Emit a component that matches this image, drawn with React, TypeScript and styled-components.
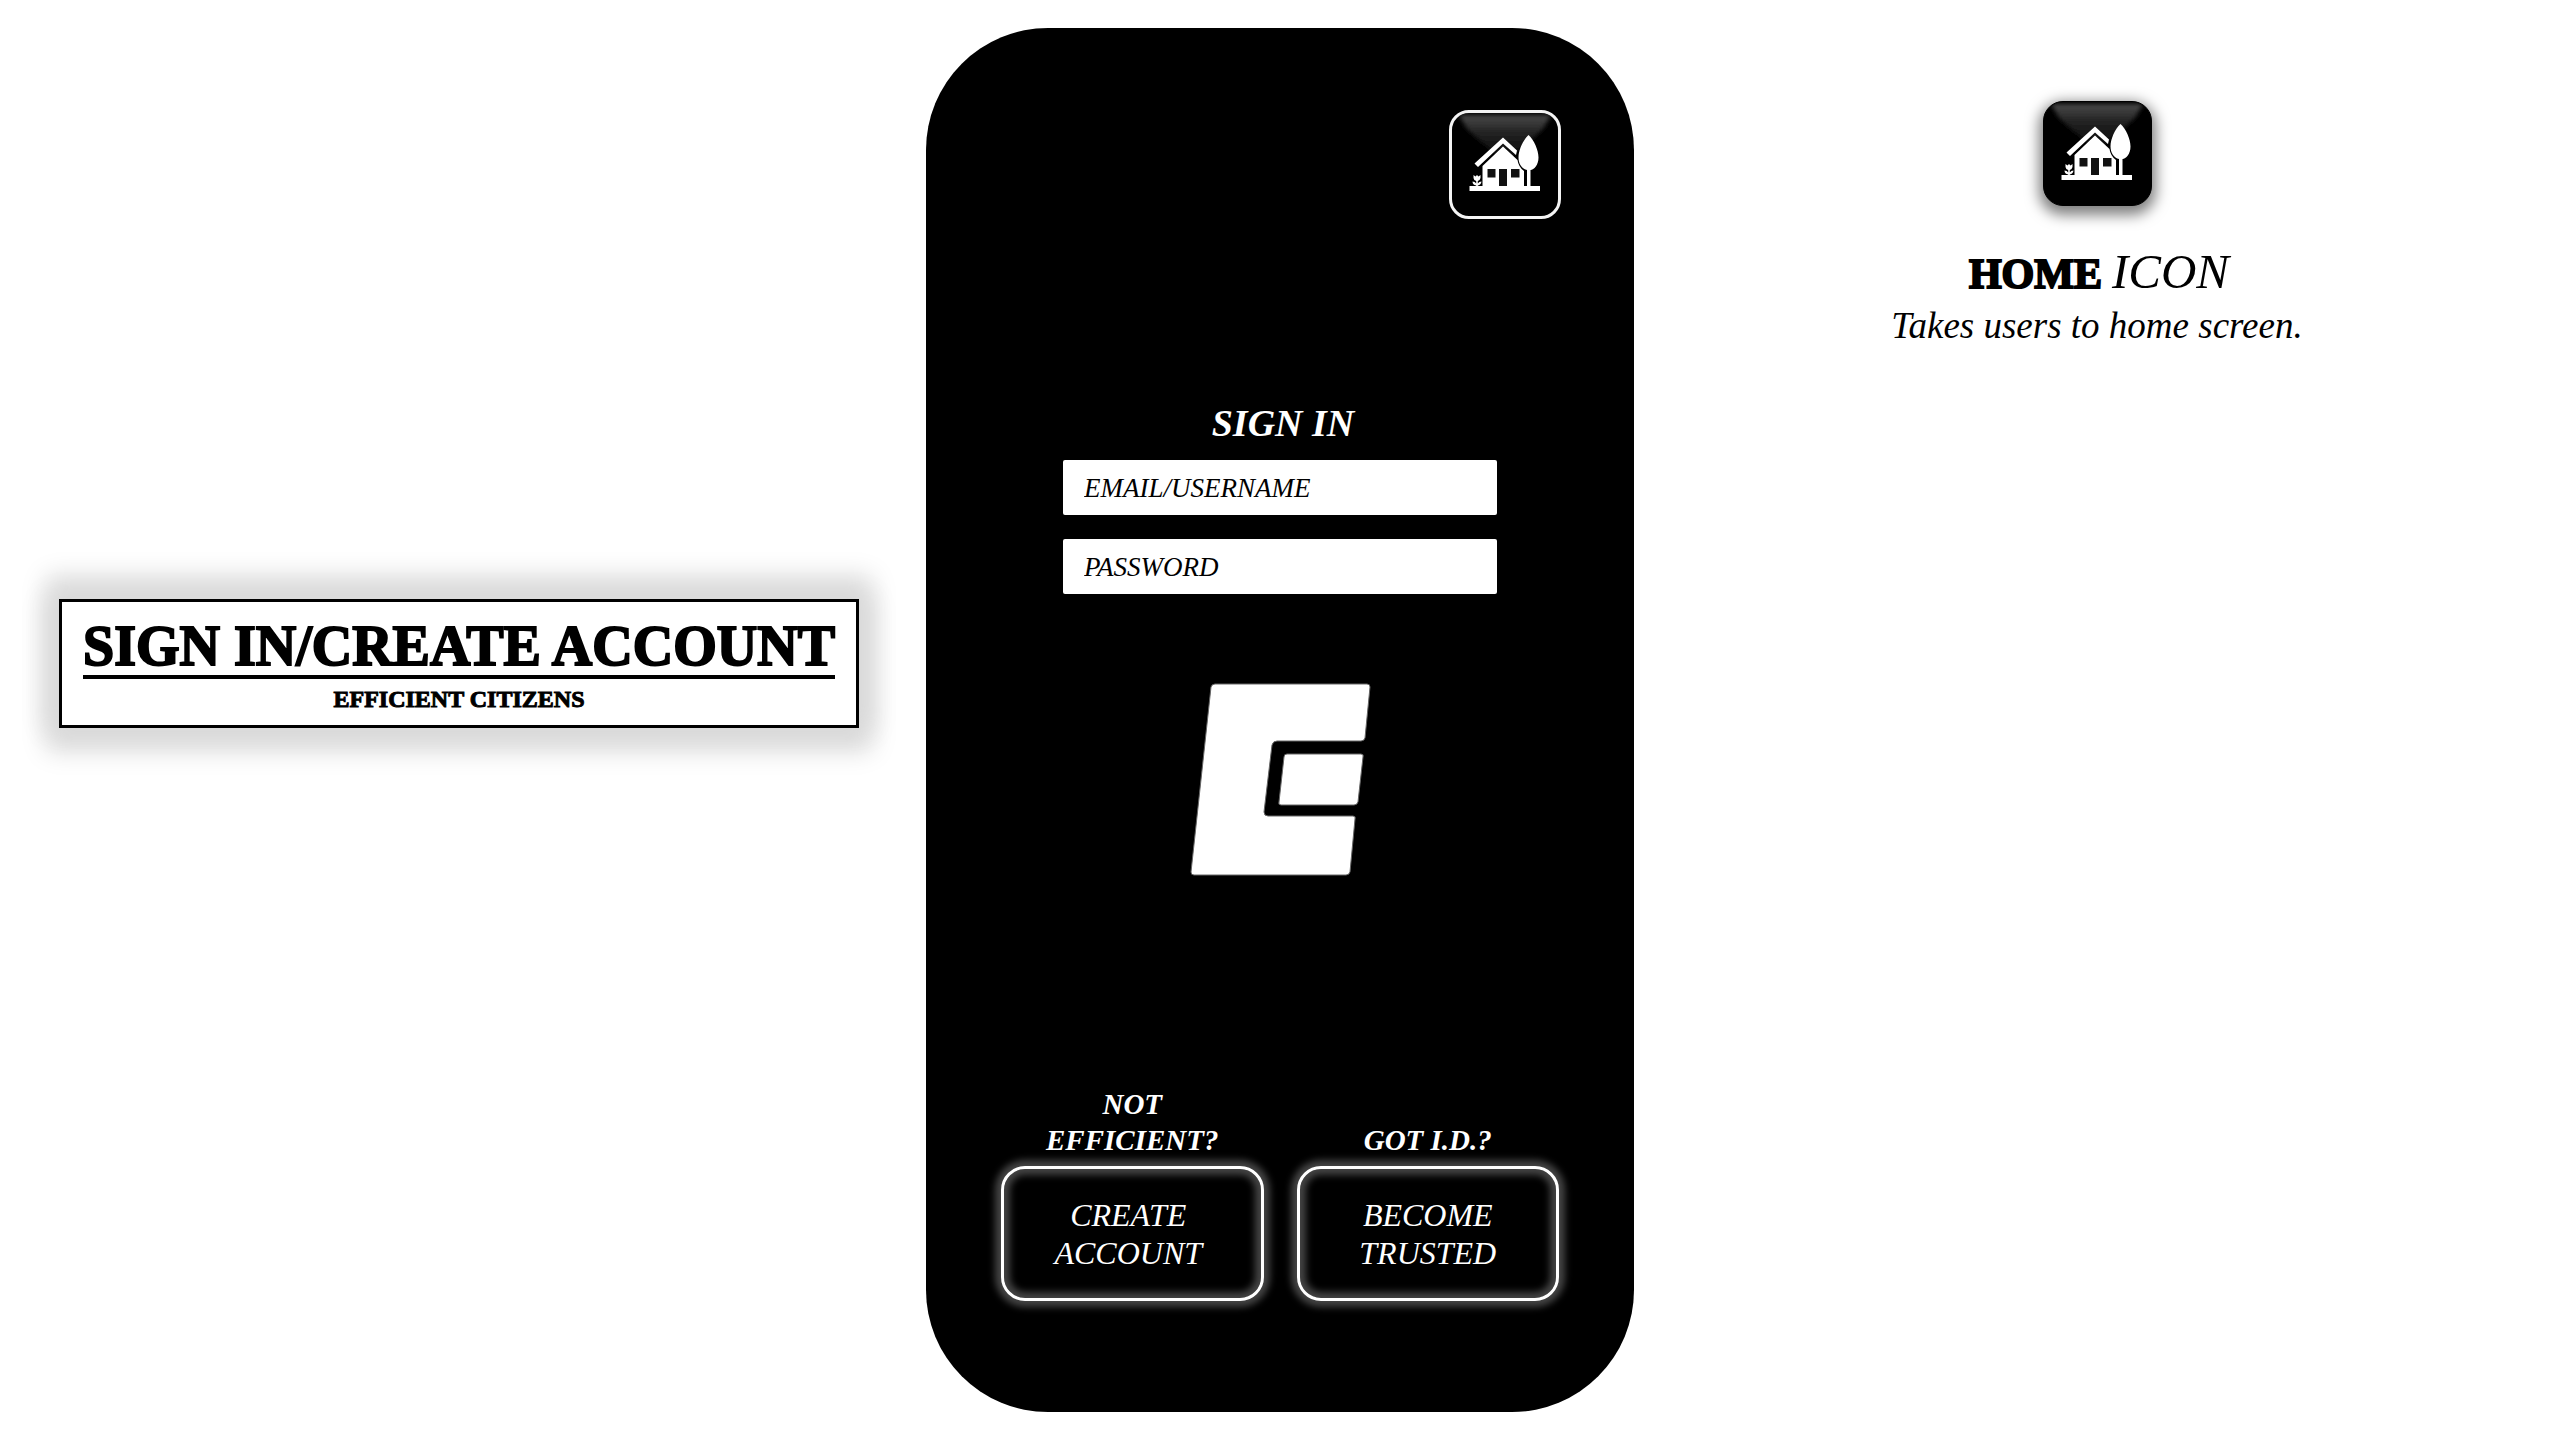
import React from "react";
import styled, { createGlobalStyle } from "styled-components";

const serif = `"Liberation Serif", "Times New Roman", serif`;

const GlobalStyle = createGlobalStyle`
  * { box-sizing: border-box; }
  body { margin: 0; background: #fff; color: #000; font-family: ${serif}; }
`;

const Page = styled.main`
  display: grid;
  grid-template-columns: minmax(0, 1fr) 708px minmax(0, 1fr);
  align-items: start;
  padding: 28px 0 30px;
`;

const Side = styled.section<{ $top: number; $end?: number }>`
  display: flex;
  flex-direction: column;
  align-items: center;
  padding: ${(p) => p.$top}px ${(p) => p.$end ?? 0}px 0 0;
`;

const TitleCard = styled.header`
  display: flex;
  flex-direction: column;
  align-items: center;
  width: 800px;
  max-width: 90%;
  height: 129px;
  padding-top: 15px;
  border: 3px solid #000;
  background: #fff;
  box-shadow: 0 -10px 24px 13px #dadada, 0 10px 24px 13px #dadada;
`;

const Title = styled.h1`
  margin: 0;
  border-bottom: 4px solid #000;
  font-size: 56px;
  line-height: 58px;
  font-weight: 700;
  white-space: nowrap;
  -webkit-text-stroke: 2px #000;
`;

const Subtitle = styled.p`
  margin: 6px 0 0;
  font-size: 24px;
  line-height: 28px;
  font-weight: 700;
  -webkit-text-stroke: 1px #000;
`;

const Phone = styled.section`
  display: flex;
  flex-direction: column;
  align-items: center;
  height: 1384px;
  padding: 82px 73px 111px;
  border-radius: 122px;
  background: #000;
  color: #fff;
`;

const HomeButton = styled.button<{ $outlined?: boolean }>`
  display: grid;
  place-content: center;
  width: ${(p) => (p.$outlined ? 112 : 109)}px;
  height: ${(p) => (p.$outlined ? 109 : 105)}px;
  padding: 0;
  overflow: hidden;
  border: ${(p) => (p.$outlined ? "3px solid #f4f4f4" : "1px solid #000")};
  border-radius: 20px;
  background: #000;
  box-shadow: ${(p) => (p.$outlined ? "none" : "0 5px 14px 4px rgba(0, 0, 0, 0.5)")};
  align-self: ${(p) => (p.$outlined ? "flex-end" : "center")};
  cursor: pointer;

  svg { display: block; }
`;

const SignInForm = styled.form`
  display: flex;
  flex-direction: column;
  align-items: center;
  gap: 24px;
  width: 434px;
  margin-top: 183px;
`;

const FormTitle = styled.h2`
  margin: 0 0 -8px;
  padding-left: 6px;
  font-size: 38px;
  line-height: 42px;
  font-style: italic;
  font-weight: 700;
`;

const Field = styled.input`
  width: 100%;
  height: 55px;
  padding: 2px 21px 0;
  border: 0;
  border-radius: 2px;
  background: #fff;
  color: #000;
  font: italic 27px/32px ${serif};

  &::placeholder { color: #000; opacity: 1; }
`;

const Logo = styled.svg`
  display: block;
  margin-top: 87px;
`;

const Actions = styled.div`
  display: grid;
  grid-template-columns: 1fr 1fr;
  align-items: end;
  gap: 33px;
  width: 100%;
  margin-top: auto;
  padding: 0 2px;
`;

const Action = styled.div`
  display: flex;
  flex-direction: column;
  align-items: center;
  gap: 8px;
`;

const Prompt = styled.p`
  margin: 0;
  font-size: 29px;
  line-height: 36px;
  font-style: italic;
  font-weight: 700;
  text-align: center;
`;

const ActionButton = styled.button`
  width: 100%;
  height: 135px;
  padding: 0;
  border: 3px solid #fff;
  border-radius: 24px;
  background: #000;
  color: #fff;
  font: italic 32px/38px ${serif};
  box-shadow: 0 0 7px 6px #444, inset 0 0 7px 6px #444;
  cursor: pointer;
`;

const LegendTitle = styled.h2`
  display: flex;
  align-items: baseline;
  gap: 10px;
  margin: 38px 0 0;
  padding-left: 4px;
  font-size: 49px;
  line-height: 56px;
  font-style: italic;
  font-weight: 400;
`;

const Strong = styled.strong`
  font-size: 42px;
  font-style: normal;
  font-weight: 700;
  -webkit-text-stroke: 2px #000;
`;

const LegendText = styled.p`
  margin: 0;
  font-size: 37px;
  line-height: 48px;
  font-style: italic;
`;

function HomeIcon({ id }: { id: string }) {
  return (
    <svg width="108" height="105" viewBox="0 0 108 105" aria-hidden="true">
      <defs>
        <linearGradient id={`${id}-top`} x1="0" y1="0" x2="0" y2="1">
          <stop offset="0" stopColor="#4a4a4a" />
          <stop offset="0.35" stopColor="#262626" />
          <stop offset="1" stopColor="#040404" />
        </linearGradient>
        <filter id={`${id}-soft`} x="-10%" y="-10%" width="120%" height="120%">
          <feGaussianBlur stdDeviation="2" />
        </filter>
      </defs>
      <path d="M8 3H100L92 17L58 48H50L16 17Z" fill={`url(#${id}-top)`} filter={`url(#${id}-soft)`} />
      <g fill="#fff">
        <path d="M52 25.500L66 38.500L65 43L52 31.500L27 55L23.500 51.500Z" />
        <path d="M31.500 54L52 34.500L66.500 48Q67.500 55 73 59V75H31.500Z" />
        <path d="M77.500 23C83 28 87.500 38 87.500 45.500C87.500 53 83 58 79.500 58V75H76V58C71 57 67.500 52 67.500 45.500C67.500 38 72 28 77.500 23Z" />
        <path d="M18.500 74H89V79H18.500Z" />
        <path d="M22.500 63L24.500 64.500L26 63L27.500 64.500L29.500 63V66Q29 68.500 26.800 69V71.500Q28 69.500 30.500 69.500Q30 73 26.800 73.500V75H25.200V73.500Q21.500 73 21.500 69.500Q24 69.500 25.200 71.500V69Q22.800 68.500 22.500 66Z" />
      </g>
      <path d="M36.500 57H44.500V65.500H36.500ZM48 57H56V74H48ZM60 57H68.500V65.500H60Z" fill="#111" />
    </svg>
  );
}

export default function App() {
  return (
    <>
      <GlobalStyle />
      <Page>
        <Side $top={571} $end={8}>
          <TitleCard>
            <Title>SIGN IN/CREATE ACCOUNT</Title>
            <Subtitle>EFFICIENT CITIZENS</Subtitle>
          </TitleCard>
        </Side>

        <Phone>
          <HomeButton type="button" $outlined aria-label="Home">
            <HomeIcon id="phone" />
          </HomeButton>

          <SignInForm>
            <FormTitle>SIGN IN</FormTitle>
            <Field type="text" aria-label="Email or username" placeholder="EMAIL/USERNAME" />
            <Field type="password" aria-label="Password" placeholder="PASSWORD" />
          </SignInForm>

          <Logo width="184" height="198" viewBox="-1 0 184 198" role="img" aria-label="Efficient Citizens">
            <g fill="#fff" stroke="#666" strokeWidth="1" strokeLinejoin="round">
              <path d="M26 3H178Q181 3 181 6L176 57Q175 60 172 60H88Q84 60 83 64L75 131Q75 135 79 135H164Q167 135 166 138L161 191Q160 194 157 194H5Q2 194 2 191L22 6Q23 3 26 3Z" />
              <path d="M98 73H172Q175 73 174 76L169 121Q168 124 165 124H92Q89 124 90 121L95 76Q95 73 98 73Z" />
            </g>
          </Logo>

          <Actions>
            <Action>
              <Prompt>
                NOT
                <br />
                EFFICIENT?
              </Prompt>
              <ActionButton type="button">
                CREATE&nbsp;
                <br />
                ACCOUNT&nbsp;
              </ActionButton>
            </Action>
            <Action>
              <Prompt>GOT I.D.?</Prompt>
              <ActionButton type="button">
                BECOME
                <br />
                TRUSTED
              </ActionButton>
            </Action>
          </Actions>
        </Phone>

        <Side $top={73}>
          <HomeButton type="button" aria-label="Home">
            <HomeIcon id="legend" />
          </HomeButton>
          <LegendTitle>
            <Strong>HOME</Strong>
            <span>ICON</span>
          </LegendTitle>
          <LegendText>Takes users to home screen.</LegendText>
        </Side>
      </Page>
    </>
  );
}
